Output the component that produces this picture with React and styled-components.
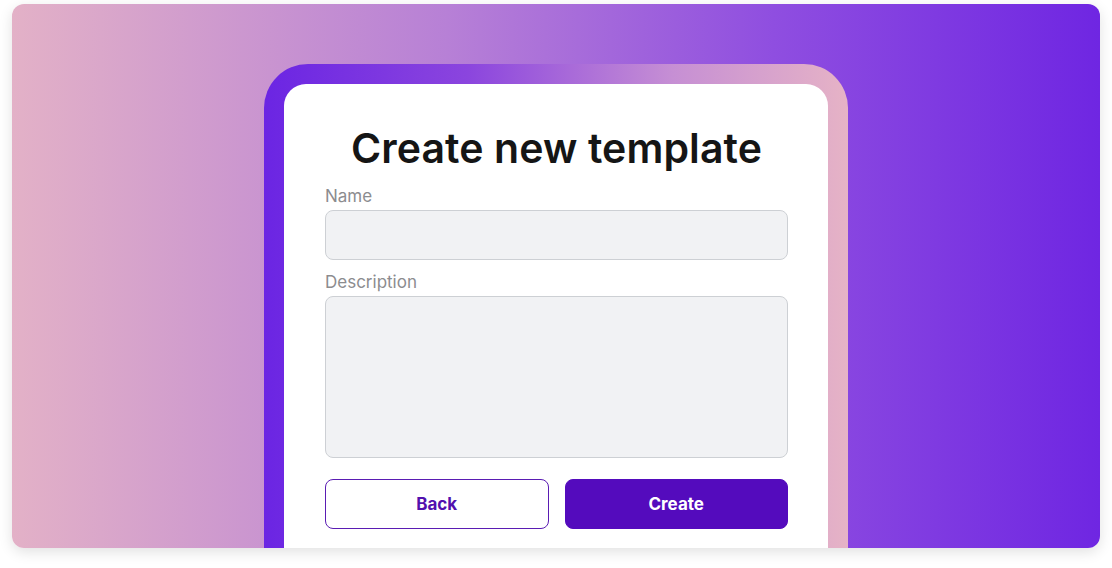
import React from "react";
import styled, { createGlobalStyle } from "styled-components";

const Global = createGlobalStyle`
  html, body { margin: 0; padding: 0; background: #ffffff; }
  body { font-family: Inter, "Noto Sans", sans-serif; }
  * { box-sizing: border-box; }
`;

const Page = styled.div`
  width: 1112px;
  height: 568px;
  padding: 4px 12px 20px;
`;

const Stage = styled.div`
  height: 544px;
  border-radius: 12px;
  overflow: hidden;
  background: linear-gradient(90deg, #e3b1c7 0%, #b780d6 40%, #8f4ee0 70%, #6f26e2 100%);
  box-shadow: 0 4px 14px rgba(0, 0, 0, 0.12);
  display: flex;
  justify-content: center;
  padding-top: 60px;
`;

const Frame = styled.div`
  width: 584px;
  padding: 20px 20px 0;
  border-radius: 44px 44px 0 0;
  background: linear-gradient(90deg, #6b25e3 0%, #8b45de 35%, #c68fd4 70%, #e6b3c6 100%);
  display: flex;
`;

const Card = styled.div`
  flex: 1;
  background: #ffffff;
  border-radius: 22px 22px 0 0;
  padding: 40px 40px 0 41px;
  display: flex;
  flex-direction: column;
`;

const Title = styled.h1`
  margin: 0 0 14px;
  font-size: 41px;
  line-height: 48px;
  font-weight: 600;
  color: #151515;
  text-align: center;
  letter-spacing: 0.1px;
`;

const Label = styled.label`
  font-size: 17px;
  line-height: 20px;
  color: #8c8c8f;
  margin-top: ${(p) => (p.$first ? "0" : "12px")};
  margin-bottom: 4px;
`;

const Field = styled.div`
  height: ${(p) => p.$h}px;
  background: #f1f2f4;
  border: 1px solid #cdd0d4;
  border-radius: 8px;
`;

const Buttons = styled.div`
  display: grid;
  grid-template-columns: 1fr 1fr;
  gap: 16px;
  margin-top: 21px;
`;

const Button = styled.button`
  height: 50px;
  border-radius: 8px;
  font-family: Inter, sans-serif;
  font-size: 17px;
  font-weight: 700;
  cursor: pointer;
  border: 1px solid #5a1cb3;
  background: ${(p) => (p.$primary ? "#540bbd" : "#ffffff")};
  color: ${(p) => (p.$primary ? "#ffffff" : "#5211ae")};
  border-color: ${(p) => (p.$primary ? "#540bbd" : "#5a1cb3")};
`;

export default function App() {
  return (
    <>
      <Global />
      <Page>
        <Stage>
          <Frame>
            <Card>
              <Title>Create new template</Title>
              <Label $first>Name</Label>
              <Field $h={50} />
              <Label>Description</Label>
              <Field $h={162} />
              <Buttons>
                <Button>Back</Button>
                <Button $primary>Create</Button>
              </Buttons>
            </Card>
          </Frame>
        </Stage>
      </Page>
    </>
  );
}
